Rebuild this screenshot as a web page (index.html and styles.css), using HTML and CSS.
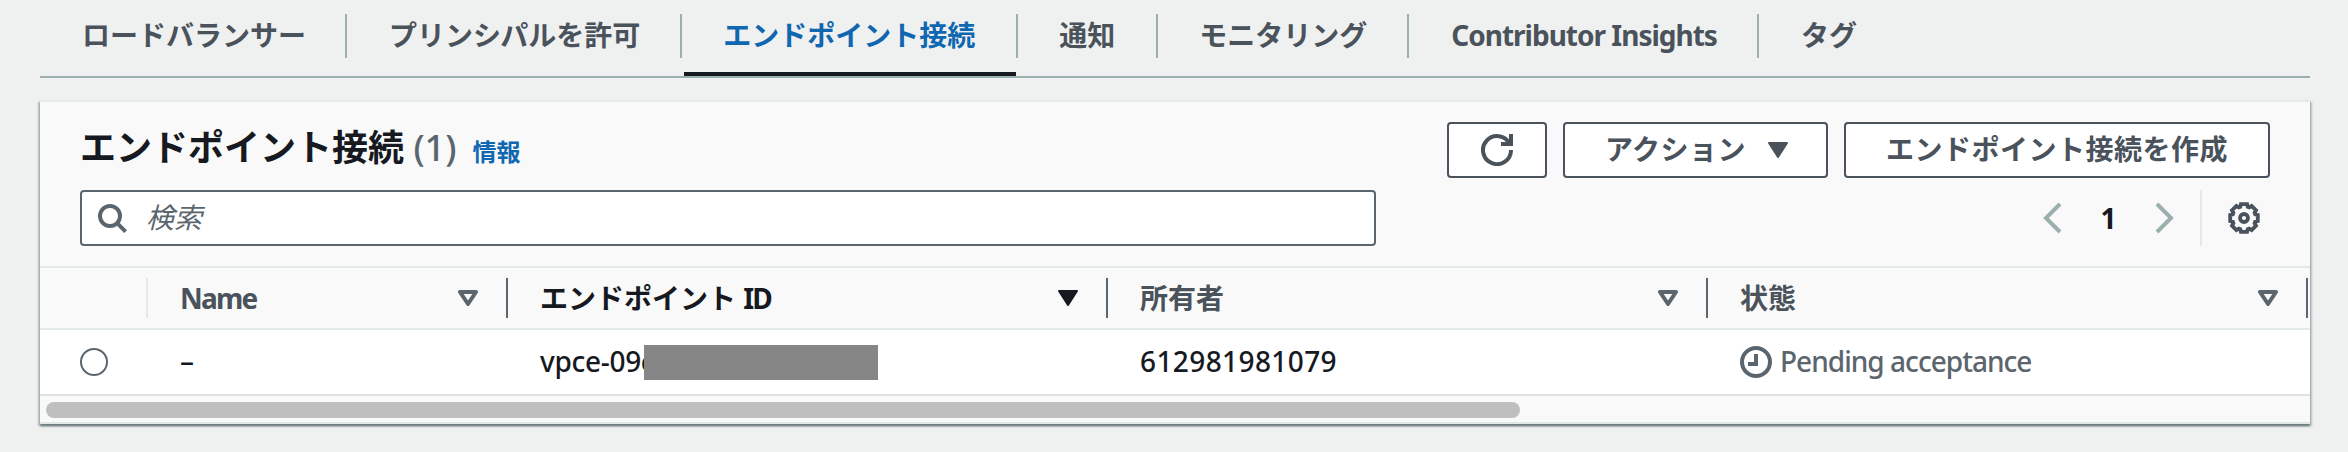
FILE: index.html
```html
<!DOCTYPE html>
<html lang="ja">
<head>
<meta charset="utf-8">
<title>エンドポイント接続</title>
<link rel="stylesheet" href="styles.css">
</head>
<body>
<nav class="tabs">
  <a class="tab">ロードバランサー</a>
  <a class="tab">プリンシパルを許可</a>
  <a class="tab active">エンドポイント接続</a>
  <a class="tab">通知</a>
  <a class="tab">モニタリング</a>
  <a class="tab latin">Contributor Insights</a>
  <a class="tab">タグ</a>
</nav>
<main class="card">
  <header class="head">
    <div class="title-row">
      <h2 class="title">エンドポイント接続 <span class="count">(1)</span></h2>
      <a class="info">情報</a>
      <div class="actions">
        <button class="btn btn-icon"><svg class="icon" viewBox="0 0 16 16"><path d="M10 5h5V0"/><path d="M15 8a7 7 0 1 1-.7-3"/></svg></button>
        <button class="btn">アクション<svg class="caret btn-caret" viewBox="0 0 20 16"><path class="solid" d="M1 1h18l-9 14z"/></svg></button>
        <button class="btn">エンドポイント接続を作成</button>
      </div>
    </div>
    <div class="tools">
      <div class="search">
        <svg class="icon" viewBox="0 0 16 16"><circle cx="7" cy="7" r="5"/><path d="m10.8 10.8 4 4"/></svg>
        <span class="placeholder">検索</span>
      </div>
      <div class="pager">
        <svg class="chev" viewBox="0 0 20 32"><path d="M17 2 3 16l14 14"/></svg>
        <span class="page">1</span>
        <svg class="chev" viewBox="0 0 20 32"><path d="m3 2 14 14L3 30"/></svg>
      </div>
      <div class="prefs">
        <svg class="icon gear" viewBox="0 0 32 32"><path d="M29.800 12.900V19.100L27.200 19.700 26.600 21.300 28 23.600 23.600 28 21.300 26.600 19.700 27.200 19.100 29.800H12.900L12.300 27.200 10.700 26.600 8.400 28 4 23.600 5.400 21.300 4.800 19.700 2.200 19.100V12.900L4.800 12.300 5.400 10.700 4 8.400 8.400 4 10.700 5.400 12.300 4.800 12.900 2.200H19.100L19.700 4.800 21.300 5.400 23.600 4 28 8.400 26.600 10.700 27.200 12.300z"/><circle cx="16" cy="16" r="4"/></svg>
      </div>
    </div>
  </header>
  <div class="grid thead">
    <div class="th pick"></div>
    <div class="th"><span class="name">Name</span><svg class="caret" viewBox="0 0 20 16"><path d="M2 2h16l-8 12z"/></svg></div>
    <div class="th sorted"><span>エンドポイント <span class="tight">ID</span></span><svg class="caret" viewBox="0 0 20 16"><path class="solid" d="M1 1h18l-9 14z"/></svg></div>
    <div class="th">所有者<svg class="caret" viewBox="0 0 20 16"><path d="M2 2h16l-8 12z"/></svg></div>
    <div class="th">状態<svg class="caret" viewBox="0 0 20 16"><path d="M2 2h16l-8 12z"/></svg></div>
  </div>
  <div class="grid row">
    <div class="td pick"><span class="radio"></span></div>
    <div class="td">–</div>
    <div class="td"><span class="id">vpce-09c<span class="mask"></span></span></div>
    <div class="td digits">612981981079</div>
    <div class="td status"><svg class="icon" viewBox="0 0 16 16"><circle cx="8" cy="8" r="7"/><path d="M8 4v5H4"/></svg><span>Pending acceptance</span></div>
  </div>
  <div class="scroll"><div class="thumb"></div></div>
</main>
</body>
</html>
```
FILE: styles.css
```css
* { box-sizing: border-box; }
body {
  margin: 0;
  padding: 14px 38px 0 40px;
  height: 452px;
  overflow: hidden;
  background: #eff1f0;
  color: #16191f;
  font: 28px/44px "Noto Sans", "Noto Sans CJK JP", sans-serif;
}
.tabs {
  display: flex;
  height: 64px;
  border-bottom: 2px solid #9bafaf;
  font-weight: 700;
  line-height: 42px;
  color: #4a525b;
}
.tab {
  position: relative;
  height: 44px;
  padding: 0 40px 0 42px;
  border-right: 2px solid #9bafaf;
  white-space: nowrap;
}
.tab:first-child { padding-right: 39px; }
.tab:last-child { border-right: 0; }
.tab.latin { letter-spacing: -1px; }
.tab.active { padding: 0 41px; color: #0f67b1; }
.tab.active + .tab { padding: 0 41px; }
.tab.active + .tab + .tab { padding-left: 41px; }
.tab.active::after {
  content: "";
  position: absolute;
  left: 2px;
  right: 0;
  top: 58px;
  height: 4px;
  background: #16191f;
}
.card {
  margin-top: 22px;
  height: 324px;
  background: #f9f9f9;
  border-top: 2px solid #e6e9e8;
  border-bottom: 2px solid #e2e8e8;
  box-shadow: 0 2px 2px 0 #6b7b7f, 2px 2px 2px 0 rgba(0, 28, 36, .2), -2px 2px 2px 0 rgba(0, 28, 36, .2);
}
.head { height: 166px; padding: 20px 40px 0; border-bottom: 2px solid #e3e8e8; }
.title-row { display: flex; height: 68px; }
.title { margin: 0; font-size: 36px; line-height: 52px; font-weight: 700; white-space: nowrap; }
.count { font-weight: 500; color: #5b656d; }
.info { margin-left: 16px; font-size: 24px; line-height: 60px; font-weight: 700; color: #0f67b1; }
.actions { display: flex; gap: 16px; margin-left: auto; height: 56px; }
.btn {
  display: flex;
  align-items: center;
  margin: 0;
  padding: 0 40px 2px;
  border: 2px solid #4a525b;
  border-radius: 4px;
  background: #fff;
  color: #4a525b;
  font: 700 28px/40px "Noto Sans", "Noto Sans CJK JP", sans-serif;
  letter-spacing: .5px;
  white-space: nowrap;
}
.btn-icon { width: 100px; padding: 0 32px; }
.btn-caret { margin: 2px -2px 0 22px; }
.icon, .caret, .chev { flex: none; display: block; fill: none; stroke: currentColor; stroke-width: 2; }
.icon { width: 32px; height: 32px; }
.caret { width: 20px; height: 16px; stroke-width: 4; stroke-linejoin: round; }
.caret .solid { fill: currentColor; stroke-width: 2; }
.gear { stroke-width: 3.8; }
.tools { display: flex; height: 56px; }
.search {
  display: flex;
  align-items: center;
  width: 1296px;
  padding: 0 14px;
  gap: 18px;
  border: 2px solid #5b656d;
  border-radius: 4px;
  background: #fff;
  color: #5b656d;
}
.placeholder { font-style: italic; margin-top: -2px; }
.pager { display: flex; align-items: center; margin-left: auto; margin-right: 26px; color: #9bafaf; }
.chev { width: 20px; height: 32px; stroke-width: 4; }
.page { width: 91px; text-align: center; font-weight: 700; color: #16191f; line-height: 54px; }
.prefs { width: 70px; padding: 12px 0 0 26px; border-left: 2px solid #e3e8e8; color: #4a525b; }
.grid { display: grid; grid-template-columns: 108px 360px 600px 600px 600px; overflow: hidden; }
.thead { height: 62px; padding: 10px 0; border-bottom: 2px solid #e3e8e8; font-weight: 700; line-height: 38px; color: #4a525b; }
.th {
  display: flex;
  align-items: center;
  justify-content: space-between;
  height: 40px;
  padding: 0 28px 0 32px;
  border-right: 2px solid #5b656d;
}
.th.pick { border-right-color: #e3e8e8; }
.th .caret { color: #5b656d; }
.th.sorted, .sorted .caret { color: #16191f; }
.name { letter-spacing: -1.8px; }
.tight { letter-spacing: -1.8px; }
.row { height: 66px; background: #fff; border-bottom: 2px solid #e0e2e2; line-height: 62px; font-weight: 500; }
.td { padding-left: 32px; white-space: nowrap; }
.td.pick { padding: 18px 0 0 40px; }
.radio { display: block; width: 28px; height: 28px; border: 2px solid #5b656d; border-radius: 50%; }
.id { position: relative; letter-spacing: -.3px; }
.mask { position: absolute; left: 104px; top: 3px; width: 234px; height: 35px; background: #868686; }
.digits { letter-spacing: .4px; }
.status { display: flex; gap: 8px; letter-spacing: -.97px; color: #5b656d; }
.status .icon { margin-top: 16px; }
.scroll { padding: 6px; }
.thumb { width: 1474px; height: 16px; border-radius: 8px; background: #bfbfbf; }
```
